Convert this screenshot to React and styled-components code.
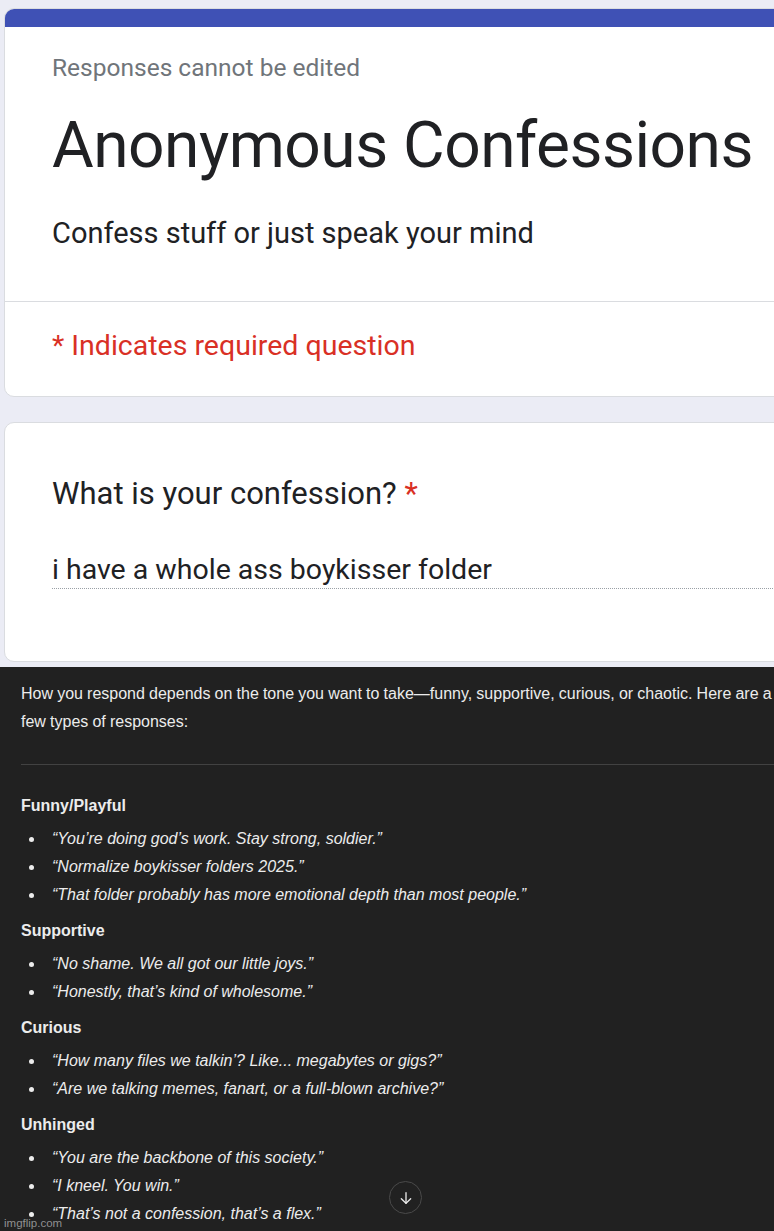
import React from "react";
import styled, { createGlobalStyle } from "styled-components";

const Global = createGlobalStyle`
  html, body { margin: 0; padding: 0; }
  body { background: #212121; overflow: hidden; width: 774px; height: 1231px; }
  #root { width: 774px; }
`;

const Page = styled.div`
  width: 774px;
  height: 1231px;
  overflow: hidden;
  display: flex;
  flex-direction: column;
`;

const FormArea = styled.div`
  background: #ebecf5;
  padding: 8px 0 5px 4px;
  display: flex;
  flex-direction: column;
  gap: 25px;
  font-family: Roboto, "Noto Sans", sans-serif;
`;

const Card = styled.div`
  background: #fff;
  margin-right: -40px;
  border: 1px solid #dadce0;
  border-radius: 10px;
  overflow: hidden;
`;

const Band = styled.div`
  height: 19px;
  margin: -1px -1px 0;
  background: #3f51b5;
`;

const Section = styled.div`
  padding: ${(p) => p.$pad};
  padding-left: 47px;
  border-top: ${(p) => (p.$divider ? "1px solid #dadce0" : "none")};
`;

const Note = styled.div`
  color: #70757a;
  font-size: 24.5px;
  line-height: 30px;
`;

const Title = styled.h1`
  margin: 25px 0 0;
  font-weight: 400;
  font-size: 64px;
  line-height: 76px;
  color: #202124;
  letter-spacing: -0.5px;
`;

const Desc = styled.div`
  margin-top: 31px;
  font-size: 29px;
  line-height: 36px;
  color: #202124;
`;

const Required = styled.div`
  color: #d93025;
  font-size: 28.5px;
  line-height: 36px;
`;

const Question = styled.div`
  font-size: 31px;
  line-height: 38px;
  color: #202124;
`;

const Star = styled.span`
  color: #d93025;
`;

const Answer = styled.div`
  margin-top: 40px;
  font-size: 28.5px;
  line-height: 34px;
  color: #202124;
  padding-bottom: 1px;
  border-bottom: 1px dotted #9aa0a6;
`;

const Chat = styled.div`
  flex: 1;
  min-height: 0;
  background: #212121;
  color: #ececec;
  font-family: "Liberation Sans", Arial, sans-serif;
  font-size: 16px;
  line-height: 28px;
  padding: 13px 0 0 21px;
  position: relative;
  margin-right: -40px;
`;

const Para = styled.p`
  margin: 0;
  max-width: 752px;
  word-spacing: -0.3px;
`;

const Rule = styled.hr`
  border: none;
  border-top: 1px solid #424242;
  margin: 28px 0 27px;
`;

const Heading = styled.h3`
  margin: 0;
  font-size: 16px;
  font-weight: 700;
  line-height: 28px;
`;

const List = styled.ul`
  margin: 5px 0 8px;
  padding: 0;
  list-style: none;
  font-style: italic;
`;

const Item = styled.li`
  position: relative;
  line-height: 28px;
  padding-left: 31px;
  &::before {
    content: "";
    position: absolute;
    left: 8px;
    top: 12px;
    width: 5px;
    height: 5px;
    border-radius: 50%;
    background: #ececec;
  }
`;

const ScrollBtn = styled.div`
  position: absolute;
  left: 389px;
  top: 514px;
  width: 31px;
  height: 31px;
  border-radius: 50%;
  border: 1px solid #4a4a4a;
  background: #212121;
  display: flex;
  align-items: center;
  justify-content: center;
`;

const Watermark = styled.div`
  position: absolute;
  left: 4px;
  top: 549px;
  font-family: "Liberation Sans", Arial, sans-serif;
  font-size: 11.5px;
  color: rgba(220,220,220,0.6);
  line-height: 14px;
`;

const groups = [
  {
    title: "Funny/Playful",
    items: [
      "\u201cYou\u2019re doing god\u2019s work. Stay strong, soldier.\u201d",
      "\u201cNormalize boykisser folders 2025.\u201d",
      "\u201cThat folder probably has more emotional depth than most people.\u201d",
    ],
  },
  {
    title: "Supportive",
    items: [
      "\u201cNo shame. We all got our little joys.\u201d",
      "\u201cHonestly, that\u2019s kind of wholesome.\u201d",
    ],
  },
  {
    title: "Curious",
    items: [
      "\u201cHow many files we talkin\u2019? Like... megabytes or gigs?\u201d",
      "\u201cAre we talking memes, fanart, or a full-blown archive?\u201d",
    ],
  },
  {
    title: "Unhinged",
    items: [
      "\u201cYou are the backbone of this society.\u201d",
      "\u201cI kneel. You win.\u201d",
      "\u201cThat\u2019s not a confession, that\u2019s a flex.\u201d",
    ],
  },
];

export default function App() {
  return (
    <Page>
      <Global />
      <FormArea>
        <Card>
          <Band />
          <Section $pad="26px 0 50px">
            <Note>Responses cannot be edited</Note>
            <Title>Anonymous Confessions</Title>
            <Desc>Confess stuff or just speak your mind</Desc>
          </Section>
          <Section $divider $pad="26px 0 32px">
            <Required>* Indicates required question</Required>
          </Section>
        </Card>
        <Card>
          <Section $pad="52px 0 72px">
            <Question>
              What is your confession? <Star>*</Star>
            </Question>
            <Answer>i have a whole ass boykisser folder</Answer>
          </Section>
        </Card>
      </FormArea>
      <Chat>
        <Para>
          How you respond depends on the tone you want to take—funny, supportive, curious, or chaotic. Here are a few types of responses:
        </Para>
        <Rule />
        {groups.map((g) => (
          <React.Fragment key={g.title}>
            <Heading>{g.title}</Heading>
            <List>
              {g.items.map((it) => (
                <Item key={it}>{it}</Item>
              ))}
            </List>
          </React.Fragment>
        ))}
        <ScrollBtn>
          <svg width="16" height="16" viewBox="0 0 24 24" fill="none" stroke="#e8e8e8" strokeWidth="2" strokeLinecap="round" strokeLinejoin="round">
            <path d="M12 4v16" />
            <path d="M5 13l7 7 7-7" />
          </svg>
        </ScrollBtn>
        <Watermark>imgflip.com</Watermark>
      </Chat>
    </Page>
  );
}
